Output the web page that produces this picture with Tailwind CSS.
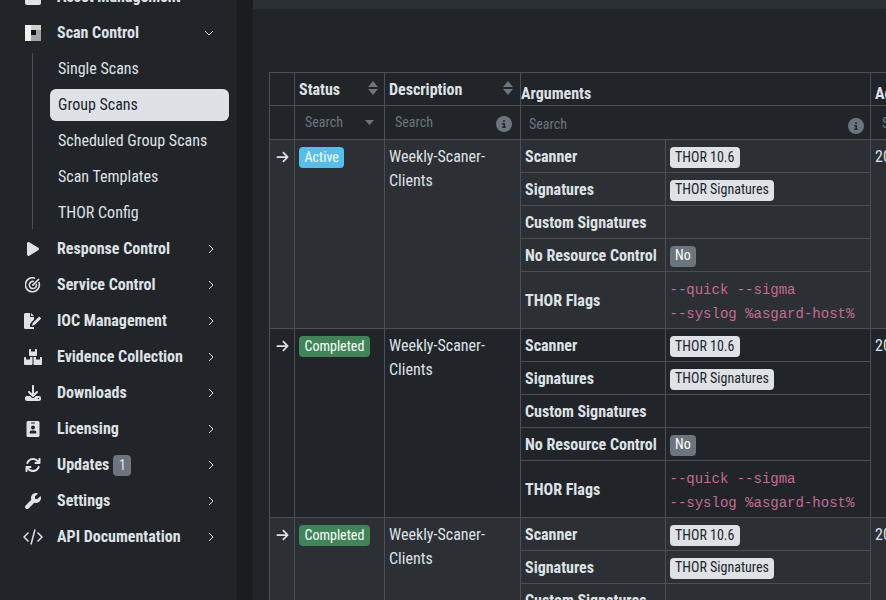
<!doctype html>
<html><head><meta charset="utf-8"><script src="https://cdn.jsdelivr.net/npm/@tailwindcss/browser@4"></script></head>
<body class="w-[886px] h-[600px] overflow-hidden bg-[#212529] font-['Roboto',sans-serif] [font-stretch:75%] text-[16px] leading-[24px] text-[#dee2e6]">
<div class="flex h-[600px]">
<aside class="w-[237px] shrink-0 h-full overflow-hidden bg-[#212529]">
<nav class="-mt-[22px] pt-[1px] pl-[25px] pr-[8px] font-bold">
<div class="flex items-center h-[36px]"><span class="w-[16px] h-[16px] mr-[16px] bg-[#dee2e6] rounded-[2px]"></span>Asset Management</div>
<div class="flex items-center h-[36px]"><svg class="w-[16px] h-[16px] mr-[16px]" viewBox="0 0 16 16" shape-rendering="crispEdges"><rect width="16" height="16" fill="#f0f0f0"/><rect x="6" width="10" height="16" fill="#a3a3a3"/><rect x="6" y="0" width="10" height="5" fill="#d0d0d0"/><rect x="6" y="5" width="5" height="5" fill="#111"/></svg>Scan Control<svg class="w-[10px] h-[10px] ml-auto mr-[15px]" viewBox="0 0 10 10" fill="none" stroke="#dee2e6" stroke-width="1"><path d="M1 3l4 4 4-4"/></svg></div>
<div class="relative pl-[25px] font-normal">
  <div class="absolute left-[7px] top-[2px] bottom-[2px] w-px bg-[#495057]"></div>
  <div class="h-[36px] flex items-center pl-[8px]">Single Scans</div>
  <div class="h-[36px] flex items-center"><div class="w-full h-[32px] flex items-center pl-[8px] rounded-[6px] bg-[#dee2e6] text-[#212529]">Group Scans</div></div>
  <div class="h-[36px] flex items-center pl-[8px]">Scheduled Group Scans</div>
  <div class="h-[36px] flex items-center pl-[8px]">Scan Templates</div>
  <div class="h-[36px] flex items-center pl-[8px]">THOR Config</div>
</div>
<div class="flex items-center h-[36px]"><svg class="w-[16px] h-[16px] mr-[16px]" viewBox="0 0 512 512" fill="#dee2e6"><path transform="translate(64 0)" d="M73 39c-14.8-9.1-33.4-9.4-48.5-.9S0 62.6 0 80V432c0 17.4 9.4 33.4 24.5 41.9s33.7 8.1 48.5-.9L361 297c14.3-8.7 23-24.2 23-41s-8.7-32.2-23-41L73 39z"/></svg>Response Control<svg class="w-[10px] h-[10px] ml-auto mr-[13px]" viewBox="0 0 10 10" fill="none" stroke="#dee2e6" stroke-width="1"><path d="M3 1l4 4-4 4"/></svg></div>
<div class="flex items-center h-[36px]"><svg class="w-[16px] h-[16px] mr-[16px]" viewBox="0 0 16 16" fill="none" stroke="#dee2e6" stroke-width="1.6"><path d="M13.8 5A7 7 0 1 1 10 1.300"/><path d="M11.300 6.800a3.600 3.600 0 1 1-2.400-2.300"/><path d="M8 8l6-6" stroke-width="1.7"/><circle cx="8" cy="8" r="1" fill="#dee2e6" stroke="none"/></svg>Service Control<svg class="w-[10px] h-[10px] ml-auto mr-[13px]" viewBox="0 0 10 10" fill="none" stroke="#dee2e6" stroke-width="1"><path d="M3 1l4 4-4 4"/></svg></div>
<div class="flex items-center h-[36px]"><svg class="w-[18px] h-[16px] -ml-[1px] mr-[15px]" viewBox="0 0 18 16" fill="#dee2e6"><path d="M0 1.500A1.500 1.500 0 0 1 1.500 0H6v4h4v2.600L6.500 10.200 5.700 13H3.500l-1-1-1 1.500h-.5v-1h.2l1.300-1.500 1 1.200h2.400l.4 1.800H10V16H1.500A1.500 1.500 0 0 1 0 14.500z"/><path d="M7 0l3 3H7z"/><path d="M15.200 3.500l2 2-6.500 6.500-2.700.7.700-2.700z"/></svg>IOC Management<svg class="w-[10px] h-[10px] ml-auto mr-[13px]" viewBox="0 0 10 10" fill="none" stroke="#dee2e6" stroke-width="1"><path d="M3 1l4 4-4 4"/></svg></div>
<div class="flex items-center h-[36px]"><svg class="w-[18px] h-[16px] -ml-[1px] mr-[15px]" viewBox="0 0 18 16" fill="#dee2e6"><path d="M5 1a1 1 0 0 1 1-1h1v2.500h4V0h1a1 1 0 0 1 1 1v5a1 1 0 0 1-1 1H6a1 1 0 0 1-1-1z"/><path d="M0 9a1 1 0 0 1 1-1h1v2.500h4V8h2.500v7a1 1 0 0 1-1 1H1a1 1 0 0 1-1-1z"/><path d="M9.500 8H12v2.500h4V8h1a1 1 0 0 1 1 1v6a1 1 0 0 1-1 1H10.500a1 1 0 0 1-1-1z"/></svg>Evidence Collection<svg class="w-[10px] h-[10px] ml-auto mr-[13px]" viewBox="0 0 10 10" fill="none" stroke="#dee2e6" stroke-width="1"><path d="M3 1l4 4-4 4"/></svg></div>
<div class="flex items-center h-[36px]"><svg class="w-[16px] h-[16px] mr-[16px]" viewBox="0 0 512 512" fill="#dee2e6"><path d="M288 32c0-17.700-14.300-32-32-32s-32 14.300-32 32V274.700l-73.400-73.400c-12.500-12.500-32.800-12.500-45.300 0s-12.500 32.800 0 45.300l128 128c12.500 12.500 32.800 12.500 45.300 0l128-128c12.500-12.500 12.500-32.800 0-45.300s-32.800-12.500-45.300 0L288 274.700V32zM64 352c-35.300 0-64 28.700-64 64v32c0 35.300 28.700 64 64 64H448c35.300 0 64-28.700 64-64V416c0-35.300-28.700-64-64-64H346.500l-45.300 45.300c-25 25-65.500 25-90.500 0L165.500 352H64zm368 56a24 24 0 1 1 0 48 24 24 0 1 1 0-48z"/></svg>Downloads<svg class="w-[10px] h-[10px] ml-auto mr-[13px]" viewBox="0 0 10 10" fill="none" stroke="#dee2e6" stroke-width="1"><path d="M3 1l4 4-4 4"/></svg></div>
<div class="flex items-center h-[36px]"><svg class="w-[16px] h-[16px] mr-[16px]" viewBox="0 0 16 16" fill="#dee2e6"><path fill-rule="evenodd" d="M3 0h10a1.500 1.500 0 0 1 1.500 1.500v13A1.500 1.500 0 0 1 13 16H3a1.500 1.500 0 0 1-1.500-1.500v-13A1.500 1.500 0 0 1 3 0zm5 4.500a2 2 0 1 0 0 4 2 2 0 0 0 0-4zM4.700 12.500h6.600A2.500 2.500 0 0 0 9 9.500H7a2.500 2.500 0 0 0-2.300 3zM6 1.500v1h4v-1z"/></svg>Licensing<svg class="w-[10px] h-[10px] ml-auto mr-[13px]" viewBox="0 0 10 10" fill="none" stroke="#dee2e6" stroke-width="1"><path d="M3 1l4 4-4 4"/></svg></div>
<div class="flex items-center h-[36px]"><svg class="w-[16px] h-[16px] mr-[16px]" viewBox="0 0 512 512" fill="#dee2e6"><path d="M105.100 202.600c7.700-21.800 20.200-42.300 37.800-59.800c62.500-62.500 163.800-62.500 226.300 0L386.300 160H336c-17.700 0-32 14.300-32 32s14.300 32 32 32H463.500c0 0 0 0 0 0h.4c17.700 0 32-14.300 32-32V64c0-17.700-14.300-32-32-32s-32 14.300-32 32v51.200L414.400 97.600c-87.500-87.500-229.300-87.500-316.800 0C73.200 122 55.600 150.700 44.800 181.400c-5.900 16.700 2.900 34.900 19.500 40.800s34.900-2.900 40.800-19.500zM39 289.300c-5 1.500-9.800 4.200-13.700 8.200c-4 4-6.700 8.800-8.100 14c-.3 1.200-.6 2.500-.8 3.800c-.3 1.700-.4 3.400-.4 5.100V448c0 17.700 14.300 32 32 32s32-14.300 32-32V396.900l17.600 17.500 0 0c87.500 87.400 229.300 87.400 316.700 0c24.400-24.400 42.100-53.100 52.900-83.700c5.900-16.700-2.900-34.900-19.500-40.800s-34.900 2.900-40.800 19.500c-7.700 21.800-20.200 42.300-37.800 59.800c-62.500 62.500-163.800 62.500-226.300 0l-.1-.1L125.600 352H176c17.700 0 32-14.300 32-32s-14.300-32-32-32H48.400c-1.600 0-3.200 .1-4.800 .3s-3.100 .5-4.600 1z"/></svg>Updates<span class="ml-[4px] w-[18px] h-[21px] rounded-[4px] bg-[#6c757d] text-[14px] font-normal flex items-center justify-center">1</span><svg class="w-[10px] h-[10px] ml-auto mr-[13px]" viewBox="0 0 10 10" fill="none" stroke="#dee2e6" stroke-width="1"><path d="M3 1l4 4-4 4"/></svg></div>
<div class="flex items-center h-[36px]"><svg class="w-[16px] h-[16px] mr-[16px]" viewBox="0 0 512 512" fill="#dee2e6"><path d="M352 320c88.400 0 160-71.600 160-160c0-15.300-2.200-30.100-6.200-44.200c-3.100-10.800-16.400-13.200-24.300-5.300l-76.800 76.800c-3 3-7.100 4.700-11.300 4.700H336c-8.800 0-16-7.200-16-16V118.600c0-4.200 1.700-8.300 4.700-11.300l76.800-76.800c7.900-7.900 5.400-21.200-5.300-24.300C382.100 2.200 367.300 0 352 0C263.600 0 192 71.600 192 160c0 19.100 3.400 37.500 9.500 54.500L19.900 396.100C7.200 408.800 0 426.100 0 444.100C0 481.600 30.400 512 67.900 512c18 0 35.300-7.200 48-19.900L297.500 310.500c17 6.200 35.400 9.500 54.500 9.500z"/></svg>Settings<svg class="w-[10px] h-[10px] ml-auto mr-[13px]" viewBox="0 0 10 10" fill="none" stroke="#dee2e6" stroke-width="1"><path d="M3 1l4 4-4 4"/></svg></div>
<div class="flex items-center h-[36px]"><svg class="w-[20px] h-[16px] -ml-[2px] mr-[14px]" viewBox="0 0 20 16" fill="none" stroke="#dee2e6" stroke-width="1.500"><path d="M5.500 3.500L1 8l4.500 4.500M14.500 3.500L19 8l-4.500 4.500M12 .5L8 15.500"/></svg>API Documentation<svg class="w-[10px] h-[10px] ml-auto mr-[13px]" viewBox="0 0 10 10" fill="none" stroke="#dee2e6" stroke-width="1"><path d="M3 1l4 4-4 4"/></svg></div>
</nav>
</aside>
<div class="w-[16px] shrink-0 bg-[#1a1d20]"></div>
<main class="flex-1 min-w-0 overflow-hidden">
<div class="h-[9px] bg-[#2b3035]"></div>
<div class="pt-[63px] pl-[16px] w-[800px]">
<table class="w-[720px] table-fixed border-collapse border border-[#495057]">
<colgroup><col class="w-[25px]"><col class="w-[90px]"><col class="w-[136px]"><col class="w-[350px]"><col class="w-[119px]"></colgroup>
<thead class="font-bold">
<tr class="h-[33px]">
<th class="border border-[#495057] p-0"></th>
<th class="border border-[#495057] px-[4px] text-left align-top pt-[5px]"><div class="flex items-center justify-between h-[24px]"><span>Status</span><svg class="w-[10px] h-[14px] -mt-[4px] mr-[2px]" viewBox="0 0 10 14" fill="#6c757d"><path d="M5 0l5 6H0zM5 14l5-6H0z"/></svg></div></th>
<th class="border border-[#495057] px-[4px] text-left align-top pt-[5px]"><div class="flex items-center justify-between h-[24px]"><span>Description</span><svg class="w-[10px] h-[14px] -mt-[4px] mr-[3px]" viewBox="0 0 10 14" fill="#6c757d"><path d="M5 0l5 6H0zM5 14l5-6H0z"/></svg></div></th>
<th class="border border-[#495057] px-0 text-left align-top pt-[9px]"><div class="h-[22px]">Arguments</div></th>
<th class="border border-[#495057] px-[4px] text-left align-top pt-[9px]"><div class="h-[22px]">Actions</div></th>
</tr>
<tr class="h-[34px] font-normal text-[14px] text-[#6c757d]">
<th class="border border-[#495057] p-0"></th>
<th class="border border-[#495057] pl-[10px] pr-[6px] text-left font-normal"><div class="flex items-center justify-between -mt-[1px]"><span>Search</span><svg class="w-[9px] h-[5px] mr-[4px]" viewBox="0 0 9 5" fill="#6c757d"><path d="M0 0h9L4.500 5z"/></svg></div></th>
<th class="border border-[#495057] pl-[10px] pr-[8px] text-left font-normal"><div class="flex items-center justify-between"><span class="-mt-[1px]">Search</span><svg class="w-[16px] h-[16px] mt-[3px]" viewBox="0 0 512 512" fill="#6c757d"><path d="M256 512A256 256 0 1 0 256 0a256 256 0 1 0 0 512zM216 336h24V272H216c-13.300 0-24-10.700-24-24s10.700-24 24-24h48c13.300 0 24 10.700 24 24v88h8c13.300 0 24 10.700 24 24s-10.700 24-24 24H216c-13.300 0-24-10.700-24-24s10.700-24 24-24zm40-208a32 32 0 1 1 0 64 32 32 0 1 1 0-64z"/></svg></div></th>
<th class="border border-[#495057] pl-[8px] pr-[6px] text-left font-normal"><div class="flex items-center justify-between"><span class="mt-[2px]">Search</span><svg class="w-[16px] h-[16px] mt-[7px]" viewBox="0 0 512 512" fill="#6c757d"><path d="M256 512A256 256 0 1 0 256 0a256 256 0 1 0 0 512zM216 336h24V272H216c-13.300 0-24-10.700-24-24s10.700-24 24-24h48c13.300 0 24 10.700 24 24v88h8c13.300 0 24 10.700 24 24s-10.700 24-24 24H216c-13.300 0-24-10.700-24-24s10.700-24 24-24zm40-208a32 32 0 1 1 0 64 32 32 0 1 1 0-64z"/></svg></div></th>
<th class="border border-[#495057] pl-[11px] text-left font-normal">Search</th>
</tr>
</thead>
<tbody>
<tr class="h-[189px] bg-[#2c3034]">
<td class="border border-[#495057] align-top text-center p-0 pt-[5px]"><svg class="inline-block w-[13px] h-[14px] -mt-[1px]" viewBox="0 0 448 512" fill="#dee2e6"><path d="M438.600 278.600c12.500-12.500 12.500-32.800 0-45.300l-160-160c-12.500-12.500-32.800-12.500-45.300 0s-12.500 32.800 0 45.300L338.800 224 32 224c-17.700 0-32 14.300-32 32s14.300 32 32 32l306.700 0L233.400 393.400c-12.500 12.500-12.500 32.800 0 45.300s32.800 12.500 45.300 0l160-160z"/></svg></td>
<td class="border border-[#495057] align-top px-[4px] pt-[7px]"><span class="flex w-fit items-center h-[21px] pb-[2px] px-[5.5px] rounded-[4px] bg-[#54bfeb] text-white text-[14px]">Active</span></td>
<td class="border border-[#495057] align-top px-[4px] pt-[5px]">Weekly-Scaner-Clients</td>
<td class="border border-[#495057] p-0 align-top"><table class="w-full table-fixed border-collapse"><colgroup><col class="w-[144px]"><col></colgroup><tbody>
<tr class="h-[32px]"><td class="border-b border-r border-[#495057] align-top pl-[4px] pt-[5px] font-bold">Scanner</td><td class="border-b border-[#495057] align-top pl-[4px] pt-[7px]"><span class="flex w-fit items-center h-[21px] pb-[2px] px-[5.5px] rounded-[4px] bg-[#dee2e6] text-[#212529] text-[14px]">THOR 10.6</span></td></tr>
<tr class="h-[33px]"><td class="border-b border-r border-[#495057] align-top pl-[4px] pt-[5px] font-bold">Signatures</td><td class="border-b border-[#495057] align-top pl-[4px] pt-[7px]"><span class="flex w-fit items-center h-[21px] pb-[2px] px-[5.5px] rounded-[4px] bg-[#dee2e6] text-[#212529] text-[14px]">THOR Signatures</span></td></tr>
<tr class="h-[33px]"><td class="border-b border-r border-[#495057] align-top pl-[4px] pt-[5px] font-bold">Custom Signatures</td><td class="border-b border-[#495057]"></td></tr>
<tr class="h-[33px]"><td class="border-b border-r border-[#495057] align-top pl-[4px] pt-[5px] font-bold">No Resource Control</td><td class="border-b border-[#495057] align-top pl-[4px] pt-[7px]"><span class="flex w-fit items-center h-[21px] pb-[2px] px-[5.5px] rounded-[4px] bg-[#6c757d] text-white text-[14px]">No</span></td></tr>
<tr class="h-[56px]"><td class="border-r border-[#495057] pl-[4px] pt-[3px] font-bold">THOR Flags</td><td class="pl-[4px] pt-[6px] pb-[2px] font-['Liberation_Mono',monospace] text-[14px] text-[#c56a95] [font-stretch:100%]">--quick --sigma<br>--syslog %asgard-host%</td></tr>
</tbody></table></td>
<td class="border border-[#495057] align-top px-[4px] pt-[5px]">2023-01-01</td>
</tr>
<tr class="h-[189px] bg-[#212529]">
<td class="border border-[#495057] align-top text-center p-0 pt-[5px]"><svg class="inline-block w-[13px] h-[14px] -mt-[1px]" viewBox="0 0 448 512" fill="#dee2e6"><path d="M438.600 278.600c12.500-12.500 12.500-32.800 0-45.300l-160-160c-12.500-12.500-32.800-12.500-45.300 0s-12.500 32.800 0 45.300L338.800 224 32 224c-17.700 0-32 14.300-32 32s14.300 32 32 32l306.700 0L233.400 393.400c-12.500 12.500-12.500 32.800 0 45.300s32.800 12.500 45.300 0l160-160z"/></svg></td>
<td class="border border-[#495057] align-top px-[4px] pt-[7px]"><span class="flex w-fit items-center h-[21px] pb-[2px] px-[5.5px] rounded-[4px] bg-[#3f8557] text-white text-[14px]">Completed</span></td>
<td class="border border-[#495057] align-top px-[4px] pt-[5px]">Weekly-Scaner-Clients</td>
<td class="border border-[#495057] p-0 align-top"><table class="w-full table-fixed border-collapse"><colgroup><col class="w-[144px]"><col></colgroup><tbody>
<tr class="h-[32px]"><td class="border-b border-r border-[#495057] align-top pl-[4px] pt-[5px] font-bold">Scanner</td><td class="border-b border-[#495057] align-top pl-[4px] pt-[7px]"><span class="flex w-fit items-center h-[21px] pb-[2px] px-[5.5px] rounded-[4px] bg-[#dee2e6] text-[#212529] text-[14px]">THOR 10.6</span></td></tr>
<tr class="h-[33px]"><td class="border-b border-r border-[#495057] align-top pl-[4px] pt-[5px] font-bold">Signatures</td><td class="border-b border-[#495057] align-top pl-[4px] pt-[7px]"><span class="flex w-fit items-center h-[21px] pb-[2px] px-[5.5px] rounded-[4px] bg-[#dee2e6] text-[#212529] text-[14px]">THOR Signatures</span></td></tr>
<tr class="h-[33px]"><td class="border-b border-r border-[#495057] align-top pl-[4px] pt-[5px] font-bold">Custom Signatures</td><td class="border-b border-[#495057]"></td></tr>
<tr class="h-[33px]"><td class="border-b border-r border-[#495057] align-top pl-[4px] pt-[5px] font-bold">No Resource Control</td><td class="border-b border-[#495057] align-top pl-[4px] pt-[7px]"><span class="flex w-fit items-center h-[21px] pb-[2px] px-[5.5px] rounded-[4px] bg-[#6c757d] text-white text-[14px]">No</span></td></tr>
<tr class="h-[56px]"><td class="border-r border-[#495057] pl-[4px] pt-[3px] font-bold">THOR Flags</td><td class="pl-[4px] pt-[6px] pb-[2px] font-['Liberation_Mono',monospace] text-[14px] text-[#c56a95] [font-stretch:100%]">--quick --sigma<br>--syslog %asgard-host%</td></tr>
</tbody></table></td>
<td class="border border-[#495057] align-top px-[4px] pt-[5px]">2023-01-01</td>
</tr>
<tr class="h-[189px] bg-[#2c3034]">
<td class="border border-[#495057] align-top text-center p-0 pt-[5px]"><svg class="inline-block w-[13px] h-[14px] -mt-[1px]" viewBox="0 0 448 512" fill="#dee2e6"><path d="M438.600 278.600c12.500-12.500 12.500-32.800 0-45.300l-160-160c-12.500-12.500-32.800-12.500-45.300 0s-12.500 32.800 0 45.300L338.800 224 32 224c-17.700 0-32 14.300-32 32s14.300 32 32 32l306.700 0L233.400 393.400c-12.500 12.500-12.500 32.800 0 45.300s32.800 12.500 45.300 0l160-160z"/></svg></td>
<td class="border border-[#495057] align-top px-[4px] pt-[7px]"><span class="flex w-fit items-center h-[21px] pb-[2px] px-[5.5px] rounded-[4px] bg-[#3f8557] text-white text-[14px]">Completed</span></td>
<td class="border border-[#495057] align-top px-[4px] pt-[5px]">Weekly-Scaner-Clients</td>
<td class="border border-[#495057] p-0 align-top"><table class="w-full table-fixed border-collapse"><colgroup><col class="w-[144px]"><col></colgroup><tbody>
<tr class="h-[32px]"><td class="border-b border-r border-[#495057] align-top pl-[4px] pt-[5px] font-bold">Scanner</td><td class="border-b border-[#495057] align-top pl-[4px] pt-[7px]"><span class="flex w-fit items-center h-[21px] pb-[2px] px-[5.5px] rounded-[4px] bg-[#dee2e6] text-[#212529] text-[14px]">THOR 10.6</span></td></tr>
<tr class="h-[33px]"><td class="border-b border-r border-[#495057] align-top pl-[4px] pt-[5px] font-bold">Signatures</td><td class="border-b border-[#495057] align-top pl-[4px] pt-[7px]"><span class="flex w-fit items-center h-[21px] pb-[2px] px-[5.5px] rounded-[4px] bg-[#dee2e6] text-[#212529] text-[14px]">THOR Signatures</span></td></tr>
<tr class="h-[33px]"><td class="border-b border-r border-[#495057] align-top pl-[4px] pt-[5px] font-bold">Custom Signatures</td><td class="border-b border-[#495057]"></td></tr>
</tbody></table></td>
<td class="border border-[#495057] align-top px-[4px] pt-[5px]">2023-01-01</td>
</tr>
</tbody>
</table>
</div>
</main>
</div>
</body></html>
